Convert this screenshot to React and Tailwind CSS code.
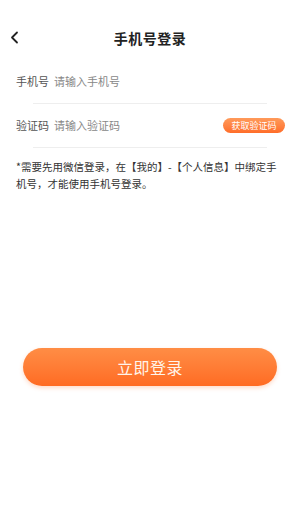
export default function App() {
  const font = { fontFamily: '"Noto Sans CJK SC", "Noto Sans", sans-serif' };
  return (
    <div className="w-[300px] h-[505px] bg-white flex flex-col" style={font}>
      {/* header */}
      <div className="relative h-[40px] mt-[18px] flex items-center justify-center">
        <svg className="absolute left-[10px] top-[13px]" width="9" height="13" viewBox="0 0 9 13" fill="none">
          <path d="M7 1.5L2 6.5L7 11.5" stroke="#222" strokeWidth="1.8" strokeLinecap="round" strokeLinejoin="round" />
        </svg>
        <div className="text-[14px] font-bold text-[#222] tracking-[0.5px]">手机号登录</div>
      </div>

      {/* phone row */}
      <div className="flex items-center h-[44px] px-[16px] mt-[1px]">
        <span className="text-[11px] text-[#555] w-[38px]">手机号</span>
        <span className="text-[11px] text-[#888]">请输入手机号</span>
      </div>
      <div className="mx-[33px] h-px bg-[#eeeeee]" />

      {/* code row */}
      <div className="flex items-center h-[43px] px-[16px]">
        <span className="text-[11px] text-[#555] w-[38px]">验证码</span>
        <span className="text-[11px] text-[#888] flex-1">请输入验证码</span>
        <span className="h-[15px] w-[62px] mr-[-1px] rounded-full bg-gradient-to-b from-[#ff9a5a] to-[#ff6d28] text-white text-[9px] leading-[15px] text-center">
          获取验证码
        </span>
      </div>
      <div className="mx-[33px] h-px bg-[#eeeeee]" />

      {/* note */}
      <div className="pl-[16px] pr-[16px] mt-[10px] text-[10.5px] leading-[17px] text-[#333]">
        *需要先用微信登录，在【我的】-【个人信息】中绑定手机号，才能使用手机号登录。
      </div>

      {/* login button */}
      <div className="mt-[156px] px-[23px]">
        <div className="h-[38px] rounded-full bg-gradient-to-b from-[#ff8d45] to-[#ff6b22] flex items-center justify-center shadow-[0_2px_4px_rgba(255,110,40,0.25)]">
          <span className="text-[16px] text-[#fff4ea] tracking-[0.5px]">立即登录</span>
        </div>
      </div>
    </div>
  );
}
